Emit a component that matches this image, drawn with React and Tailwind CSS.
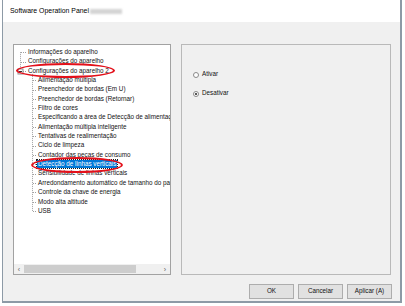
import React from "react";

const items = [
  { t: "Informações do aparelho", l: 0 },
  { t: "Configurações do aparelho", l: 0 },
  { t: "Configurações do aparelho 2", l: 0 },
  { t: "Alimentação múltipla", l: 1 },
  { t: "Preenchedor de bordas (Em U)", l: 1 },
  { t: "Preenchedor de bordas (Retornar)", l: 1 },
  { t: "Filtro de cores", l: 1 },
  { t: "Especificando a área de Detecção de alimentação múltipla", l: 1 },
  { t: "Alimentação múltipla inteligente", l: 1 },
  { t: "Tentativas de realimentação", l: 1 },
  { t: "Ciclo de limpeza", l: 1 },
  { t: "Contador das peças de consumo", l: 1 },
  { t: "Detecção de linhas verticais", l: 1, sel: true },
  { t: "Sensibilidade de linhas verticais", l: 1 },
  { t: "Arredondamento automático de tamanho do papel", l: 1 },
  { t: "Controle da chave de energia", l: 1 },
  { t: "Modo alta altitude", l: 1 },
  { t: "USB", l: 1 },
];

const R = 9.35;
const PT = 2.5;
const cy = (i) => PT + R * i + R / 2;

function TreeLines() {
  const dash = { stroke: "#a0a0a0", strokeWidth: 1, strokeDasharray: "1 1" };
  return (
    <svg className="absolute left-0 top-0" width="156" height="220">
      <line x1="6.5" y1={cy(0)} x2="6.5" y2={cy(2)} {...dash} />
      {[0, 1, 2].map((i) => (
        <line key={i} x1="7" y1={Math.round(cy(i)) + 0.5} x2="12" y2={Math.round(cy(i)) + 0.5} {...dash} />
      ))}
      <line x1="18.5" y1={cy(2) + 3} x2="18.5" y2={cy(17)} {...dash} />
      {items.slice(3).map((_, k) => {
        const i = k + 3;
        const y = Math.round(cy(i)) + 0.5;
        return <line key={i} x1="19" y1={y} x2="23" y2={y} {...dash} />;
      })}
      <rect x="4" y={Math.round(cy(2)) - 2} width="5" height="5" fill="#fff" stroke="#919191" strokeWidth="1" />
      <line x1="5" y1={Math.round(cy(2)) + 0.5} x2="8" y2={Math.round(cy(2)) + 0.5} stroke="#333" strokeWidth="1" />
    </svg>
  );
}

export default function App() {
  const font = { fontFamily: '"Liberation Sans", Arial, sans-serif' };
  return (
    <div className="relative w-[405px] h-[306px] bg-white overflow-hidden" style={font}>
      <div className="ml-[2px] w-[400px] h-[303px] border-l border-r-2 border-b-2 border-[#8d9aa6] flex flex-col">
        {/* Title bar */}
        <div className="h-[22px] bg-white flex items-center pl-[7px] shrink-0">
          <span className="text-[6.9px] text-black leading-none">Software Operation Panel</span>
          <span className="ml-[1px] w-[32px] h-[5px] bg-[#d4d4d4] blur-[1px]" />
        </div>
        {/* Body */}
        <div className="flex-1 bg-[#f0f0f0] flex flex-col pl-[10px] pt-[22px]">
          <div className="flex gap-[10px] h-[231px]">
            {/* Tree box */}
            <div className="w-[158px] h-full bg-white border border-[#a2a2a2] flex flex-col">
              <div className="relative flex-1 overflow-hidden" style={{ paddingTop: PT }}>
                <TreeLines />
                {items.map((it, i) => (
                  <div
                    key={i}
                    className={`h-[9.35px] flex items-center whitespace-nowrap text-[6.3px] leading-none ${it.l === 0 ? "pl-[13px]" : "pl-[23px]"}`}
                  >
                    {it.sel ? (
                      <span className="bg-[#0078d7] text-white px-[1px] py-[1px] outline outline-1 outline-dotted outline-[#1a1a1a]">
                        {it.t}
                      </span>
                    ) : (
                      <span className="text-[#111] px-[1px]">{it.t}</span>
                    )}
                  </div>
                ))}
              </div>
              {/* Horizontal scrollbar */}
              <div className="h-[10px] flex items-center bg-[#f0f0f0] shrink-0">
                <div className="w-[10px] h-full flex items-center justify-center text-[7px] text-[#606060] leading-none">‹</div>
                <div className="w-[112px] h-[8px] bg-[#cdcdcd]" />
                <div className="flex-1" />
                <div className="w-[10px] h-full flex items-center justify-center text-[7px] text-[#606060] leading-none">›</div>
              </div>
            </div>
            {/* Right group box */}
            <div className="w-[210px] h-full border border-[#b9b9b9] flex flex-col pt-[25px] pl-[11px] gap-[10px]">
              <div className="flex items-center gap-[3px] h-[9px]">
                <span className="w-[6px] h-[6px] rounded-full border border-[#8a8a8a] bg-white" />
                <span className="text-[6.3px] text-[#111] leading-none">Ativar</span>
              </div>
              <div className="flex items-center gap-[3px] h-[9px]">
                <span className="w-[6px] h-[6px] rounded-full border border-[#8a8a8a] bg-white flex items-center justify-center">
                  <span className="w-[2px] h-[2px] rounded-full bg-[#222]" />
                </span>
                <span className="text-[6.3px] text-[#111] leading-none">Desativar</span>
              </div>
            </div>
          </div>
          {/* Buttons */}
          <div className="flex justify-end gap-[4px] mt-[9px] pr-[8px]">
            {["OK", "Cancelar", "Aplicar (A)"].map((b) => (
              <div
                key={b}
                className="w-[45px] h-[15px] bg-[#e1e1e1] border border-[#adadad] flex items-center justify-center text-[6.3px] text-[#111] leading-none"
              >
                {b}
              </div>
            ))}
          </div>
        </div>
      </div>
      {/* Red annotation ovals */}
      <div className="absolute left-[16px] top-[63px] w-[99px] h-[15px] rounded-[50%] border-2 border-[#e3101a]" />
      <div className="absolute left-[31px] top-[157px] w-[92px] h-[16px] rounded-[50%] border-2 border-[#e3101a]" />
    </div>
  );
}
